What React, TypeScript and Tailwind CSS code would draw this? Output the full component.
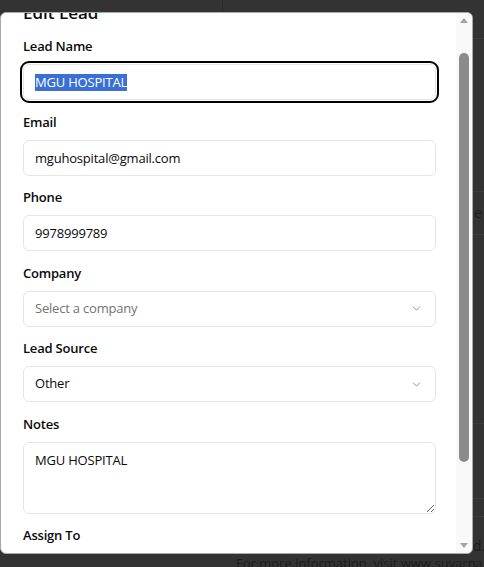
import { ChevronDown } from "lucide-react";

const font = { fontFamily: '"Open Sans", "Noto Sans", sans-serif' };

function Label({ children }: { children: React.ReactNode }) {
  return (
    <label className="mb-2 block text-[13px] leading-5 font-semibold tracking-[-0.2px] text-[#0a0a0a]">{children}</label>
  );
}

function SelectBox({ value, placeholder }: { value?: string; placeholder?: string }) {
  return (
    <div className="flex h-9 items-center justify-between rounded-md border border-[#e5e5e5] bg-white pl-[11px] pr-3 text-[13px] tracking-[-0.2px]">
      <span className={value ? "text-[#0a0a0a]" : "text-[#737373]"}>{value ?? placeholder}</span>
      <ChevronDown size={13} strokeWidth={1.75} className="text-[#5f5f5f] opacity-70" />
    </div>
  );
}

export default function App() {
  return (
    <div className="relative h-[567px] w-[484px] overflow-hidden bg-[#333333]" style={font}>
      {/* dimmed page behind the dialog */}
      <div className="absolute left-[222px] top-0 h-[12px] w-px bg-[#2b2b2b]"></div>
      <div className="absolute left-[472px] right-0 top-[38px] h-px bg-[#3d3d3d]"></div>
      <div className="absolute left-[472px] right-0 top-[191px] h-px bg-[#3d3d3d]"></div>
      <div className="absolute left-[472px] right-0 top-[234px] h-px bg-[#3d3d3d]"></div>
      <div className="absolute left-[472px] right-0 top-[423px] h-px bg-[#3d3d3d]"></div>
      <div className="absolute left-[472px] right-0 top-[498px] h-px bg-[#3d3d3d]"></div>
      <div className="absolute left-[472px] right-0 top-[516px] h-px bg-[#3d3d3d]"></div>
      <span className="absolute left-[474px] top-[206px] text-sm leading-none text-[#1c1c1c]">e</span>
      <span className="absolute left-[473px] top-[539px] text-sm leading-none text-[#1c1c1c]">d.</span>
      <span className="absolute left-[236px] top-[557px] whitespace-nowrap text-[13px] leading-none text-[#1c1c1c]">
        For more information, visit www.suvarna.co.in
      </span>

      {/* dialog */}
      <div className="absolute left-0 top-[12px] flex h-[542px] w-[473px] overflow-hidden rounded-md border border-[#a9a9a9] bg-white">
        <div className="w-[455px] overflow-hidden pl-[22px] pr-[20px]">
          <h2 className="-mt-[14px] mb-[9px] text-[17px] leading-7 font-semibold text-[#0a0a0a]">Edit Lead</h2>

          <div className="flex flex-col gap-[11.5px]">
            <div>
              <Label>Lead Name</Label>
              <div className="flex h-9 items-center rounded-md border border-[#e5e5e5] bg-white pl-[11px] text-[13px] tracking-[-0.2px] outline-2 outline-offset-1 outline-black">
                <span className="bg-[#3a6fd6] leading-[17px] text-white">MGU HOSPITAL</span>
              </div>
            </div>

            <div>
              <Label>Email</Label>
              <input
                readOnly
                value="mguhospital@gmail.com"
                className="h-9 w-full rounded-md border border-[#e5e5e5] pl-[11px] text-[13px] tracking-[-0.2px] text-[#0a0a0a] outline-none"
              />
            </div>

            <div>
              <Label>Phone</Label>
              <input
                readOnly
                value="9978999789"
                className="h-9 w-full rounded-md border border-[#e5e5e5] pl-[11px] text-[13px] tracking-[-0.2px] text-[#0a0a0a] outline-none"
              />
            </div>

            <div>
              <Label>Company</Label>
              <SelectBox placeholder="Select a company" />
            </div>

            <div>
              <Label>Lead Source</Label>
              <SelectBox value="Other" />
            </div>

            <div>
              <Label>Notes</Label>
              <textarea
                readOnly
                value="MGU HOSPITAL"
                className="block h-[72px] w-full resize-y rounded-md border border-[#e5e5e5] px-[11px] pt-[7px] text-[13px] leading-5 tracking-[-0.2px] text-[#0a0a0a] outline-none"
              />
            </div>

            <div>
              <Label>Assign To</Label>
              <SelectBox placeholder="Select a user" />
            </div>
          </div>
        </div>

        {/* scrollbar */}
        <div className="flex w-[16px] flex-col items-center bg-[#f9f9f9]">
          <div className="mt-[5px] h-0 w-0 border-x-[4px] border-b-[5px] border-x-transparent border-b-[#a3a3a3]"></div>
          <div className="mt-[30px] h-[409px] w-[10px] rounded-full bg-[#8b8b8b]"></div>
          <div className="mt-auto mb-[5px] h-0 w-0 border-x-[4px] border-t-[5px] border-x-transparent border-t-[#a3a3a3]"></div>
        </div>
      </div>
    </div>
  );
}
